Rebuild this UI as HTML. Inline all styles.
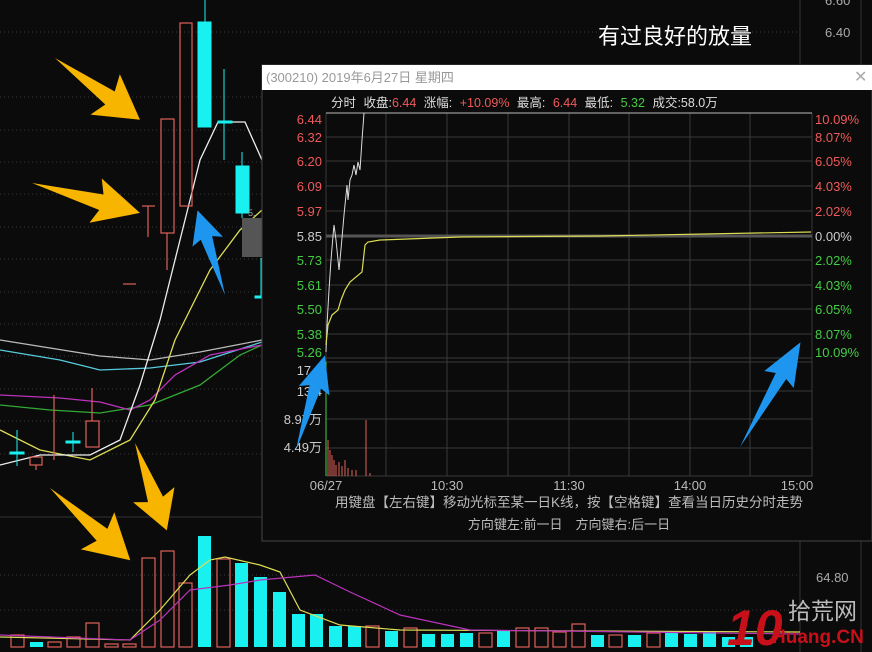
<!DOCTYPE html>
<html><head><meta charset="utf-8"><style>
html,body{margin:0;padding:0;background:#0b0b0b;width:872px;height:652px;overflow:hidden}
svg{display:block}
text{font-family:"Liberation Sans","Noto Sans CJK SC",sans-serif}
</style></head><body>
<svg width="872" height="652" viewBox="0 0 872 652" xmlns="http://www.w3.org/2000/svg">
<rect width="872" height="652" fill="#0b0b0b"/>
<g stroke="#3a3a3a" stroke-dasharray="1,3" stroke-width="1">
<line x1="0" y1="32" x2="800" y2="32"/><line x1="0" y1="97" x2="800" y2="97"/><line x1="0" y1="130" x2="800" y2="130"/>
<line x1="0" y1="162" x2="800" y2="162"/><line x1="0" y1="194" x2="800" y2="194"/><line x1="0" y1="227" x2="800" y2="227"/>
<line x1="0" y1="259" x2="800" y2="259"/><line x1="0" y1="292" x2="800" y2="292"/><line x1="0" y1="324" x2="800" y2="324"/>
<line x1="0" y1="356" x2="800" y2="356"/><line x1="0" y1="389" x2="800" y2="389"/><line x1="0" y1="421" x2="800" y2="421"/>
<line x1="0" y1="454" x2="800" y2="454"/><line x1="0" y1="575" x2="800" y2="575"/><line x1="0" y1="610" x2="800" y2="610"/>
</g>
<line x1="0" y1="517" x2="800" y2="517" stroke="#333"/>
<line x1="800" y1="0" x2="800" y2="652" stroke="#333"/>
<line x1="861" y1="0" x2="861" y2="652" stroke="#333"/>
<text x="825" y="37" fill="#aaa" font-size="13">6.40</text>
<text x="825" y="5" fill="#aaa" font-size="13">6.60</text>
<text x="816" y="582" fill="#aaa" font-size="13">64.80</text>
<text x="598" y="44" fill="#fff" font-size="22">有过良好的放量</text>

<g fill="none" stroke-width="1.3">
<polyline stroke="#bbb" points="0,340 50,348 100,356 150,360 200,352 262,340"/>
<polyline stroke="#5cd" points="0,350 60,360 100,370 150,368 200,362 262,342"/>
<polyline stroke="#3a3" points="0,405 50,410 100,413 150,405 200,385 240,355 262,345"/>
<polyline stroke="#b3b" points="0,395 60,398 100,402 130,410 150,400 175,375 210,355 262,345"/>
<polyline stroke="#dd5" points="0,430 40,450 90,460 130,440 155,400 175,340 210,270 240,230 262,210"/>
<polyline stroke="#eee" points="0,465 40,455 90,455 120,440 140,385 160,320 180,240 200,160 218,122 245,122 262,160"/>
</g>
<g stroke="#e0605a" fill="none" stroke-width="1.2">
<rect x="161" y="119" width="13" height="114"/><line x1="167" y1="233" x2="167" y2="270"/>
<rect x="180" y="23" width="12" height="183"/>
<line x1="142" y1="206" x2="155" y2="206"/><line x1="148" y1="206" x2="148" y2="237"/>
<line x1="123" y1="284" x2="136" y2="284"/>
<rect x="86" y="421" width="13" height="26"/><line x1="92" y1="388" x2="92" y2="421"/>
<rect x="30" y="457" width="12" height="8"/><line x1="36" y1="465" x2="36" y2="470"/>
<line x1="54" y1="395" x2="54" y2="460"/>
</g>
<g fill="#19f0f0" stroke="#19f0f0">
<rect x="198" y="22" width="13" height="105"/><line x1="205" y1="0" x2="205" y2="22"/>
<rect x="218" y="121" width="14" height="2"/><line x1="224" y1="69" x2="224" y2="160"/>
<rect x="236" y="166" width="13" height="47"/><line x1="242" y1="152" x2="242" y2="218"/>
<rect x="255" y="296" width="7" height="2"/><line x1="261" y1="258" x2="261" y2="298"/>
<rect x="66" y="441" width="14" height="2"/><line x1="73" y1="432" x2="73" y2="452"/>
<rect x="10" y="452" width="14" height="2"/><line x1="17" y1="430" x2="17" y2="466"/>
</g>
<rect x="242" y="218" width="20" height="39" fill="#555"/>
<text x="248" y="216" fill="#aaa" font-size="9">5.</text>

<g stroke-width="1.2">
<rect x="11" y="635" width="13" height="12" fill="none" stroke="#e0605a"/>
<rect x="30" y="642" width="13" height="5" fill="#19f0f0"/>
<rect x="48" y="642" width="13" height="5" fill="none" stroke="#e0605a"/>
<rect x="67" y="637" width="13" height="10" fill="none" stroke="#e0605a"/>
<rect x="86" y="623" width="13" height="24" fill="none" stroke="#e0605a"/>
<rect x="105" y="644" width="13" height="3" fill="none" stroke="#e0605a"/>
<rect x="123" y="644" width="13" height="3" fill="none" stroke="#e0605a"/>
<rect x="142" y="558" width="13" height="89" fill="none" stroke="#e0605a"/>
<rect x="161" y="551" width="13" height="96" fill="none" stroke="#e0605a"/>
<rect x="179" y="583" width="13" height="64" fill="none" stroke="#e0605a"/>
<rect x="198" y="536" width="13" height="111" fill="#19f0f0"/>
<rect x="217" y="559" width="13" height="88" fill="none" stroke="#e0605a"/>
<rect x="235" y="563" width="13" height="84" fill="#19f0f0"/>
<rect x="254" y="577" width="13" height="70" fill="#19f0f0"/>
<rect x="273" y="592" width="13" height="55" fill="#19f0f0"/>
<rect x="292" y="614" width="13" height="33" fill="#19f0f0"/>
<rect x="310" y="614" width="13" height="33" fill="#19f0f0"/>
<rect x="329" y="626" width="13" height="21" fill="#19f0f0"/>
<rect x="348" y="626" width="13" height="21" fill="#19f0f0"/>
<rect x="366" y="626" width="13" height="21" fill="none" stroke="#e0605a"/>
<rect x="385" y="631" width="13" height="16" fill="#19f0f0"/>
<rect x="404" y="628" width="13" height="19" fill="none" stroke="#e0605a"/>
<rect x="422" y="634" width="13" height="13" fill="#19f0f0"/>
<rect x="441" y="634" width="13" height="13" fill="#19f0f0"/>
<rect x="460" y="633" width="13" height="14" fill="#19f0f0"/>
<rect x="479" y="633" width="13" height="14" fill="none" stroke="#e0605a"/>
<rect x="497" y="630" width="13" height="17" fill="#19f0f0"/>
<rect x="516" y="628" width="13" height="19" fill="none" stroke="#e0605a"/>
<rect x="535" y="628" width="13" height="19" fill="none" stroke="#e0605a"/>
<rect x="553" y="632" width="13" height="15" fill="none" stroke="#e0605a"/>
<rect x="572" y="624" width="13" height="23" fill="none" stroke="#e0605a"/>
<rect x="591" y="635" width="13" height="12" fill="#19f0f0"/>
<rect x="609" y="635" width="13" height="12" fill="none" stroke="#e0605a"/>
<rect x="628" y="635" width="13" height="12" fill="#19f0f0"/>
<rect x="647" y="633" width="13" height="14" fill="none" stroke="#e0605a"/>
<rect x="665" y="631" width="13" height="16" fill="#19f0f0"/>
<rect x="684" y="634" width="13" height="13" fill="#19f0f0"/>
<rect x="703" y="632" width="13" height="15" fill="#19f0f0"/>
<rect x="722" y="637" width="13" height="10" fill="#19f0f0"/>
<rect x="740" y="637" width="13" height="10" fill="#19f0f0"/>
</g>
<g fill="none" stroke-width="1.2">
<polyline stroke="#dd5" points="0,637 130,640 160,610 190,575 210,560 225,557 260,565 280,572 300,610 340,625 400,630 800,632"/>
<polyline stroke="#b3b" points="0,635 130,640 160,620 190,590 230,585 260,580 315,575 350,592 400,615 470,630 800,634"/>
</g>

<text x="727" y="645" fill="#c8101a" font-size="50" font-weight="bold" font-style="italic">10</text>
<text x="788" y="619" fill="#bbb" font-size="23">拾荒网</text>
<text x="772" y="643" fill="#c8101a" font-size="19" font-weight="bold">Huang.CN</text>

<rect x="262" y="65" width="610" height="476" fill="#0b0b0b" stroke="#444"/>
<rect x="262" y="65" width="610" height="25" fill="#fff"/>
<text x="266" y="82" fill="#999" font-size="13">(300210) 2019年6月27日 星期四</text>
<text x="854" y="82" fill="#aaa" font-size="16">✕</text>
<text x="331" y="107" font-size="12.5" fill="#ddd" word-spacing="4">分时 <tspan>收盘:</tspan><tspan fill="#f05a5a">6.44</tspan> 涨幅: <tspan fill="#f05a5a">+10.09%</tspan> 最高: <tspan fill="#f05a5a">6.44</tspan> 最低: <tspan fill="#4c4">5.32</tspan> 成交:58.0万</text>
<g stroke="#3a3a3a" stroke-width="1">
<line x1="326" y1="137" x2="812" y2="137"/><line x1="326" y1="161" x2="812" y2="161"/><line x1="326" y1="186" x2="812" y2="186"/>
<line x1="326" y1="211" x2="812" y2="211"/><line x1="326" y1="260" x2="812" y2="260"/><line x1="326" y1="285" x2="812" y2="285"/>
<line x1="326" y1="309" x2="812" y2="309"/><line x1="326" y1="334" x2="812" y2="334"/><line x1="326" y1="358" x2="812" y2="358"/>
<line x1="326" y1="362" x2="812" y2="362"/><line x1="326" y1="391" x2="812" y2="391"/><line x1="326" y1="419" x2="812" y2="419"/><line x1="326" y1="448" x2="812" y2="448"/><line x1="326" y1="476" x2="812" y2="476"/>
<line x1="386" y1="113" x2="386" y2="476"/><line x1="447" y1="113" x2="447" y2="476"/><line x1="508" y1="113" x2="508" y2="476"/>
<line x1="569" y1="113" x2="569" y2="476"/><line x1="629" y1="113" x2="629" y2="476"/><line x1="690" y1="113" x2="690" y2="476"/>
<line x1="750" y1="113" x2="750" y2="476"/><line x1="812" y1="113" x2="812" y2="476"/><line x1="326" y1="113" x2="326" y2="476"/>
</g>
<line x1="326" y1="113" x2="812" y2="113" stroke="#bbb"/>
<line x1="326" y1="236" x2="812" y2="236" stroke="#555" stroke-width="3"/>
<g font-size="13" fill="#f05a5a" text-anchor="end">
<text x="322" y="124">6.44</text><text x="322" y="142">6.32</text><text x="322" y="166">6.20</text><text x="322" y="191">6.09</text><text x="322" y="216">5.97</text>
<text x="322" y="241" fill="#ccc">5.85</text>
<text x="322" y="265" fill="#4c4">5.73</text><text x="322" y="290" fill="#4c4">5.61</text><text x="322" y="314" fill="#4c4">5.50</text><text x="322" y="339" fill="#4c4">5.38</text><text x="322" y="357" fill="#4c4">5.26</text>
<text x="322" y="375" fill="#ccc">17.9</text><text x="322" y="396" fill="#ccc">13.4</text><text x="322" y="424" fill="#ccc">8.97万</text><text x="322" y="452" fill="#ccc">4.49万</text>
</g>
<g font-size="13" fill="#f05a5a">
<text x="815" y="124">10.09%</text><text x="815" y="142">8.07%</text><text x="815" y="166">6.05%</text><text x="815" y="191">4.03%</text><text x="815" y="216">2.02%</text>
<text x="815" y="241" fill="#ccc">0.00%</text>
<text x="815" y="265" fill="#4c4">2.02%</text><text x="815" y="290" fill="#4c4">4.03%</text><text x="815" y="314" fill="#4c4">6.05%</text><text x="815" y="339" fill="#4c4">8.07%</text><text x="815" y="357" fill="#4c4">10.09%</text>
</g>
<polyline fill="none" stroke="#ddd" stroke-width="1" points="326,352 327,325 329,290 331,260 333,236 334,225 336,240 337,250 339,270 340,260 342,238 344,215 346,195 347,185 348,200 350,180 352,175 354,165 356,175 358,162 360,170 362,140 364,113"/>
<polyline fill="none" stroke="#dd5" stroke-width="1.2" points="326,345 328,325 332,315 338,310 341,300 345,290 350,282 362,272 365,245 368,242 380,240 460,237 600,236 811,232"/>
<g stroke="#e0605a" stroke-width="1">
<line x1="328" y1="476" x2="328" y2="440"/><line x1="330" y1="476" x2="330" y2="450"/><line x1="332" y1="476" x2="332" y2="455"/><line x1="334" y1="476" x2="334" y2="460"/>
<line x1="336" y1="476" x2="336" y2="465"/><line x1="339" y1="476" x2="339" y2="462"/><line x1="342" y1="476" x2="342" y2="466"/><line x1="345" y1="476" x2="345" y2="460"/>
<line x1="348" y1="476" x2="348" y2="468"/><line x1="352" y1="476" x2="352" y2="470"/><line x1="356" y1="476" x2="356" y2="470"/><line x1="366" y1="476" x2="366" y2="420"/><line x1="370" y1="476" x2="370" y2="473"/>
</g>
<line x1="326" y1="362" x2="326" y2="476" stroke="#4c4"/>
<g font-size="13" fill="#bbb" text-anchor="middle">
<text x="326" y="490">06/27</text><text x="447" y="490">10:30</text><text x="569" y="490">11:30</text><text x="690" y="490">14:00</text><text x="797" y="490">15:00</text>
<text x="569" y="507" font-size="13.5">用键盘【左右键】移动光标至某一日K线，按【空格键】查看当日历史分时走势</text>
<text x="569" y="529">方向键左:前一日　方向键右:后一日</text>
</g>

<g fill="#f7b500">
<polygon transform="translate(55,58) rotate(36)" points="0,0 68,-8 62,-25 105,0 62,25 68,8"/>
<polygon transform="translate(32,183) rotate(15.5)" points="0,0 72,-8 66,-23 112,0 66,23 72,8"/>
<polygon transform="translate(50,488) rotate(42)" points="0,0 70,-8 64,-25 108,0 64,25 70,8"/>
<polygon transform="translate(135,443) rotate(70)" points="0,0 60,-8 55,-22 93,0 55,22 60,8"/>
</g>
<g fill="#1e96f0">
<polygon transform="translate(225,295) rotate(-108)" points="0,0 60,-6 56,-16 89,0 56,16 60,6"/>
<polygon transform="translate(296,450) rotate(-73)" points="0,0 66,-6 62,-16 99,0 62,16 66,6"/>
<polygon transform="translate(740,447) rotate(-60)" points="0,0 82,-6 78,-17 121,0 78,17 82,6"/>
</g>
</svg>
</body></html>
